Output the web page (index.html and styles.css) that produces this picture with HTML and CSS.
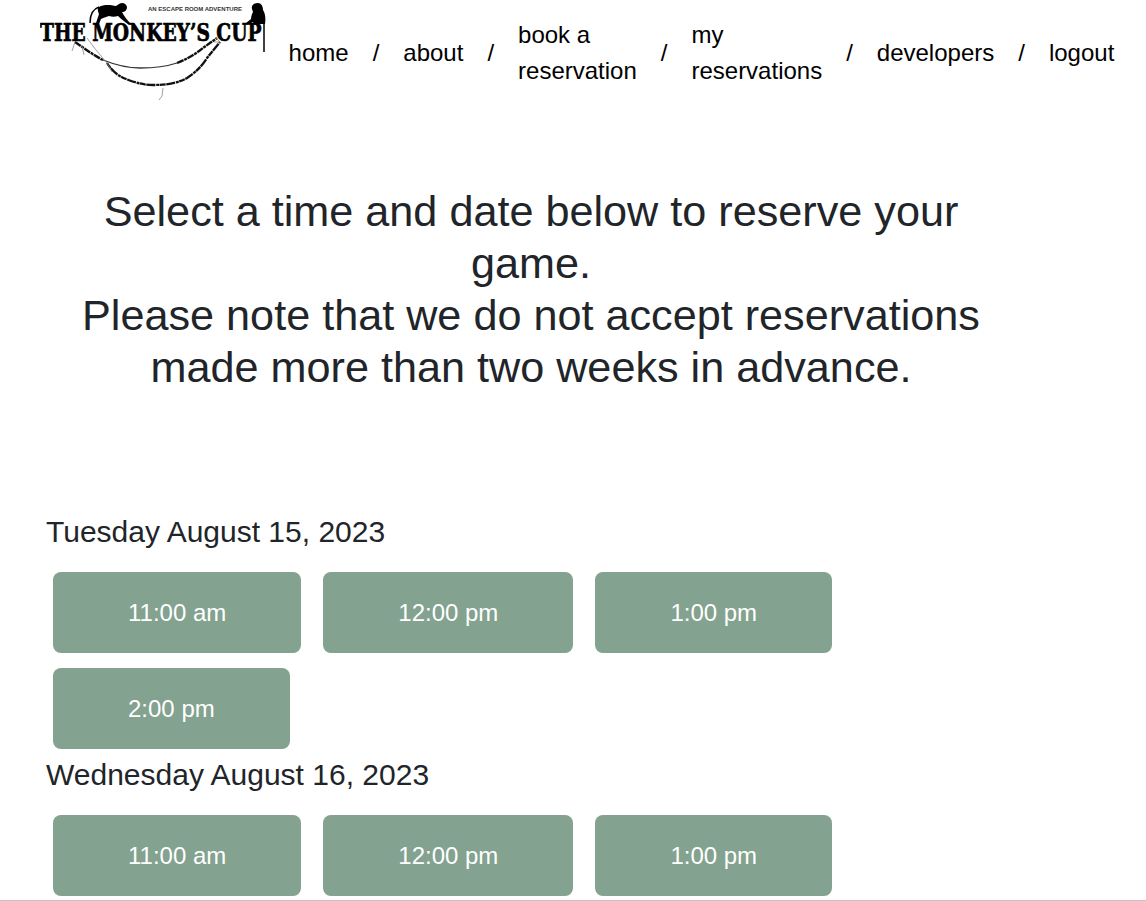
FILE: index.html
```html
<!DOCTYPE html>
<html lang="en">
<head>
<meta charset="utf-8">
<title>The Monkey's Cup</title>
<link rel="stylesheet" href="styles.css">
</head>
<body>
<header class="nav">
  <svg class="logo" width="228" height="104" viewBox="0 0 228 104" aria-label="The Monkey's Cup">
    <path class="fill" d="M56 23 L59 14 C58 11 57 9 59 7 C64 4 71 5 76 6 L79 4 C82 2 86 3 87 7 C87 10 85 12 82 12 C84 16 87 20 91 24 L89 25 C85 22 81 19 78 16 C75 17 72 17 69 16 C66 17 63 18 61 19 L59 24 Z"/>
    <path class="tail" d="M50 23 C50 15 53 9 59 7"/>
    <path class="fill" d="M212 9 C211 5 214 3 218 3 C221 3 223 6 223 10 C225 13 226 18 225 24 L214 24 L213 22 L207 25 L206 23 L211 19 C211 16 212 14 213 12 Z"/>
    <path class="tail" d="M224 24 L224 52"/>
    <text class="tagline" x="108" y="11" textLength="94" lengthAdjust="spacingAndGlyphs">AN ESCAPE ROOM ADVENTURE</text>
    <text class="title" transform="translate(0 41) scale(.78 1)" textLength="284" lengthAdjust="spacingAndGlyphs">THE MONKEY’S CUP</text>
    <path class="vine thick" d="M35 42 C44 48 53 55 63 60"/>
    <path class="vine mid" d="M63 60 C78 66 88 68 100 68 C115 68 128 66 137 63"/>
    <path class="vine thick" d="M137 63 C147 59 156 54 163 48 L177 38"/>
    <path class="vine rough" d="M67 63 C72 71 78 76 86 79 C96 83 104 85 113 85 C127 85 138 83 147 78 C155 73 162 66 167 58 L180 42"/>
    <path class="thin" d="M35 42 L32 51 M42 46 L44 55 M47 38 L56 50 L67 63 L72 72 M123 88 L122 96 L119 100 M176 38 L180 42 L174 42"/>
  </svg>
  <nav class="links">
    <a href="#">home</a><span>/</span>
    <a href="#">about</a><span>/</span>
    <a class="wrap" href="#">book a reservation</a><span>/</span>
    <a class="wrap" href="#">my reservations</a><span>/</span>
    <a href="#">developers</a><span>/</span>
    <a href="#">logout</a>
  </nav>
</header>
<main>
  <h1 class="intro">Select a time and date below to reserve your game.<br>Please note that we do not accept reservations made more than two weeks in advance.</h1>
  <section class="day">
    <h2>Tuesday August 15, 2023</h2>
    <div class="slots">
      <button>11:00 am</button>
      <button>12:00 pm</button>
      <button>1:00 pm</button>
      <button>2:00 pm</button>
    </div>
  </section>
  <section class="day">
    <h2>Wednesday August 16, 2023</h2>
    <div class="slots">
      <button>11:00 am</button>
      <button>12:00 pm</button>
      <button>1:00 pm</button>
    </div>
  </section>
</main>
<div class="edge"></div>
</body>
</html>
```
FILE: styles.css
```css
html, body { margin: 0; height: 901px; overflow: hidden; background: #fff; }
body { font-family: "Liberation Sans", Arial, sans-serif; color: #212529; position: relative; }
.nav { display: flex; align-items: flex-start; height: 104px; padding-left: 40px; }
.logo { flex: none; display: block; }
.fill { fill: #000; }
.tail { fill: none; stroke: #000; stroke-width: 1.5; }
.tagline { font: 700 5.6px "Liberation Sans", sans-serif; fill: #333; }
.title { font: 700 23.5px "DejaVu Serif", serif; fill: #000; stroke: #000; stroke-width: .7; }
.vine { fill: none; stroke: #111; }
.thick { stroke-width: 2.4; stroke-dasharray: 7 .7 3 .7; }
.mid { stroke: #333; stroke-width: 1.3; }
.rough { stroke-width: 2.3; stroke-dasharray: 6 .6 9 .8 3 .5; }
.thin { fill: none; stroke: #888; stroke-width: .8; }
.links { display: flex; align-items: center; gap: 24px; margin-left: 20.6px; padding-top: 17px; font-size: 24px; line-height: 36px; }
.links a { color: #000; text-decoration: none; }
.links span { color: #000; }
.links .wrap { width: min-content; }
main { padding-top: 81px; }
.intro { width: 940px; margin: 0 0 0 61px; font-size: 43.2px; font-weight: 400; line-height: 52px; text-align: center; color: #212529; }
.intro + .day { margin-top: 121px; }
.day h2 { margin: 0; padding-left: 46px; font-size: 30px; font-weight: 400; line-height: 36px; }
.slots { display: flex; flex-wrap: wrap; width: 880px; margin: 0 0 0 53px; gap: 15px 22px; padding: 22px 0 8px; }
.slots button { height: 81px; padding: 0 75px; border: 0; border-radius: 8px; background: #83a28f; color: #fff; font: 24px "Liberation Sans", Arial, sans-serif; }
.edge { position: absolute; left: 0; right: 0; bottom: 0; height: 1px; background: #c4c4c4; }
```
